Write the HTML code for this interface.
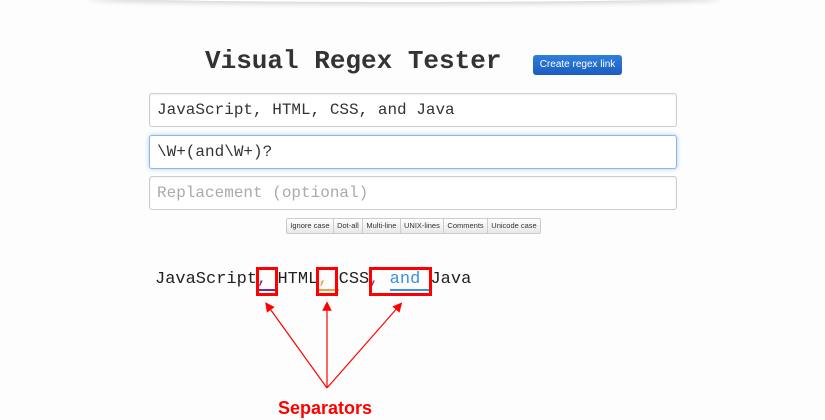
<!DOCTYPE html>
<html><head><meta charset="utf-8"><style>
body{margin:0;width:825px;height:420px;background:#fefdfd;position:relative;overflow:hidden;font-family:"Liberation Sans",sans-serif}
.top{position:absolute;left:90px;top:-8px;width:630px;height:10px;border-radius:50%;box-shadow:0 2px 6px rgba(0,0,0,.18);background:#fff}
.title{position:absolute;left:205px;top:46px;font:bold 26px "Liberation Mono",monospace;color:#333;white-space:nowrap}
.btn{position:absolute;left:533px;top:55px;width:89px;height:20px;background:linear-gradient(#2f7fdc,#1a5dc0);border-radius:3px;color:#fff;font-size:10px;line-height:20px;text-align:center}
.ta{position:absolute;left:149px;width:528px;border:1px solid #ccc;border-radius:3px;background:#fff;font:16px "Liberation Mono",monospace;color:#333;padding-left:7px;box-sizing:border-box;box-shadow:inset 0 1px 2px rgba(0,0,0,.06)}
.opts{position:absolute;left:286px;top:218px;height:14px;border:1px solid #ccc;border-radius:2px;display:flex;font-size:7.5px;color:#333;background:linear-gradient(#fff,#e8e8e8)}
.opts span{padding:0 3.3px;line-height:14px;border-right:1px solid #ccc}
.opts span:last-child{border:none}
.res{position:absolute;left:155px;top:270px;font:17px "Liberation Mono",monospace;color:#222;white-space:pre}
.box{position:absolute;border:3px solid #f00;box-sizing:border-box}
.lbl{position:absolute;left:278px;top:398px;color:#f00;font:bold 18px "Liberation Sans",sans-serif}
</style></head><body>
<div class="top"></div>
<div class="title">Visual Regex Tester</div>
<div class="btn">Create regex link</div>
<div class="ta" style="top:93px;height:34px;line-height:32px">JavaScript, HTML, CSS, and Java</div>
<div class="ta" style="top:135px;height:34px;line-height:32px;border-color:#8bb8e8;box-shadow:0 0 4px rgba(80,150,230,.5)">\W+(and\W+)?</div>
<div class="ta" style="top:176px;height:34px;line-height:32px;color:#aaa">Replacement (optional)</div>
<div class="opts"><span>Ignore case</span><span>Dot-all</span><span>Multi-line</span><span>UNIX-lines</span><span>Comments</span><span>Unicode case</span></div>
<div class="res">JavaScript<span style="color:#7a2a8a;border-bottom:2px solid #7a2a8a">, </span>HTML<span style="color:#e8a040;border-bottom:2px solid #e8a040">, </span>CSS<span style="color:#c03080">, </span><span style="color:#3a90e0;border-bottom:2px solid #3a90e0">and </span>Java</div>
<div class="box" style="left:256px;top:267px;width:22px;height:29px"></div>
<div class="box" style="left:316px;top:267px;width:22px;height:29px"></div>
<div class="box" style="left:369px;top:267px;width:63px;height:29px"></div>
<svg style="position:absolute;left:0;top:0" width="825" height="420">
<defs><marker id="a" markerWidth="8" markerHeight="8" refX="4" refY="4" orient="auto"><path d="M0,0 L8,4 L0,8 z" fill="#f00"/></marker></defs>
<g stroke="#f00" stroke-width="1.2" fill="none">
<line x1="327" y1="388" x2="268" y2="306" marker-end="url(#a)"/>
<line x1="327" y1="388" x2="327" y2="306" marker-end="url(#a)"/>
<line x1="327" y1="388" x2="399" y2="306" marker-end="url(#a)"/>
</g></svg>
<div class="lbl">Separators</div>
</body></html>
